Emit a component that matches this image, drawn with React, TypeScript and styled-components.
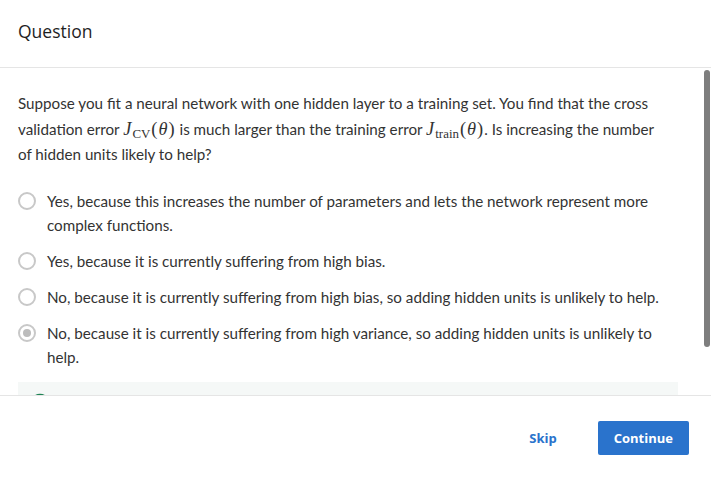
import React from "react";
import styled, { createGlobalStyle } from "styled-components";

const GlobalStyle = createGlobalStyle`
  html, body { margin: 0; padding: 0; background: #ffffff; }
  body { font-family: "Source Sans Pro", Lato, "Noto Sans", sans-serif; color: #1f1f1f; }
  * { box-sizing: border-box; }
`;

const Dialog = styled.div`
  width: 711px;
  height: 480px;
  display: flex;
  flex-direction: column;
  background: #fff;
`;

const Header = styled.header`
  height: 68px;
  flex: none;
  display: flex;
  align-items: flex-start;
  padding: 19px 18px 0;
  border-bottom: 1px solid #e5e5e5;
`;

const Title = styled.h2`
  margin: 0;
  font-family: "Open Sans", "Noto Sans", sans-serif;
  font-weight: 400;
  font-size: 17.5px;
  line-height: 24px;
  color: #1f1f1f;
`;

const BodyWrap = styled.div`
  position: relative;
  flex: 1;
  min-height: 0;
  display: flex;
`;

const Body = styled.div`
  flex: 1;
  overflow: hidden;
  padding: 23px 33px 24px 18px;
`;

const ScrollThumb = styled.div`
  position: absolute;
  right: 1px;
  top: 2px;
  width: 6px;
  height: 277px;
  border-radius: 3px;
  background: #7e7e7e;
`;

const Prompt = styled.p`
  margin: 0 15px 21px 0;
  font-size: 15.2px;
  line-height: 25.5px;
  color: #333;
`;

const MathVar = styled.span`
  font-family: "Liberation Serif", "DejaVu Serif", serif;
  font-style: italic;
  font-size: 1.21em;
  line-height: 1;
`;

const MathRoman = styled.span`
  font-family: "Liberation Serif", "DejaVu Serif", serif;
  font-size: 1.21em;
  line-height: 1;
  padding: 0 1px;
`;

const Sub = styled.sub`
  font-family: "Liberation Serif", "DejaVu Serif", serif;
  font-style: normal;
  font-size: 0.85em;
  line-height: 1;
  vertical-align: -0.25em;
  margin-left: 1px;
`;

const Options = styled.div`
  display: flex;
  flex-direction: column;
  gap: 12px;
  padding-right: 15px;
`;

const Option = styled.label`
  display: flex;
  align-items: flex-start;
  gap: 11px;
  font-size: 15.2px;
  line-height: 24px;
  color: #333;
`;

const Radio = styled.span<{ $checked?: boolean }>`
  flex: none;
  width: 18px;
  height: 18px;
  margin-top: 3px;
  border-radius: 50%;
  border: 2px solid #c8c8c8;
  background: #fff;
  display: flex;
  align-items: center;
  justify-content: center;
  &::after {
    content: "";
    width: 8px;
    height: 8px;
    border-radius: 50%;
    background: ${(p) => (p.$checked ? "#bcbcbc" : "transparent")};
  }
`;

const Feedback = styled.div`
  margin-top: 13px;
  background: #f5f8f7;
  padding: 9px 12px 13px;
  display: flex;
  align-items: center;
  gap: 10px;
  font-size: 15.2px;
  line-height: 24px;
  color: #1e7a4a;
`;

const Footer = styled.footer`
  height: 85px;
  flex: none;
  border-top: 1px solid #e5e5e5;
  display: flex;
  align-items: center;
  justify-content: flex-end;
  gap: 25px;
  padding: 0 22px 0 0;
`;

const Button = styled.button<{ $primary?: boolean }>`
  font-family: "Open Sans", "Noto Sans", sans-serif;
  font-weight: 700;
  font-size: 13px;
  height: 34px;
  padding: 0 16px;
  min-width: ${(p) => (p.$primary ? "90px" : "auto")};
  border: none;
  border-radius: 2px;
  cursor: pointer;
  background: ${(p) => (p.$primary ? "#2a73cc" : "transparent")};
  color: ${(p) => (p.$primary ? "#ffffff" : "#2a73cc")};
`;

const CheckIcon = () => (
  <svg width="20" height="20" viewBox="0 0 20 20" fill="none">
    <circle cx="10" cy="10" r="8.5" stroke="#1f8354" strokeWidth="1.6" />
    <path d="M6 10.2l2.6 2.6L14 7.4" stroke="#1f8354" strokeWidth="1.6" />
  </svg>
);

const options = [
  { text: "Yes, because this increases the number of parameters and lets the network represent more complex functions.", checked: false },
  { text: "Yes, because it is currently suffering from high bias.", checked: false },
  { text: "No, because it is currently suffering from high bias, so adding hidden units is unlikely to help.", checked: false },
  { text: "No, because it is currently suffering from high variance, so adding hidden units is unlikely to help.", checked: true },
];

export default function App() {
  return (
    <>
      <GlobalStyle />
      <Dialog>
        <Header>
          <Title>Question</Title>
        </Header>
        <BodyWrap>
          <Body>
            <Prompt>
              Suppose you fit a neural network with one hidden layer to a training set. You find that the cross validation error{" "}
              <MathVar>J</MathVar>
              <Sub>CV</Sub>
              <MathRoman>(</MathRoman>
              <MathVar>θ</MathVar>
              <MathRoman>)</MathRoman> is much larger than the training error{" "}
              <MathVar>J</MathVar>
              <Sub>train</Sub>
              <MathRoman>(</MathRoman>
              <MathVar>θ</MathVar>
              <MathRoman>)</MathRoman>. Is increasing the number of hidden units likely to help?
            </Prompt>
            <Options>
              {options.map((o, i) => (
                <Option key={i}>
                  <Radio $checked={o.checked} />
                  <span>{o.text}</span>
                </Option>
              ))}
            </Options>
            <Feedback>
              <CheckIcon />
              <span>Correct</span>
            </Feedback>
          </Body>
          <ScrollThumb />
        </BodyWrap>
        <Footer>
          <Button>Skip</Button>
          <Button $primary>Continue</Button>
        </Footer>
      </Dialog>
    </>
  );
}
